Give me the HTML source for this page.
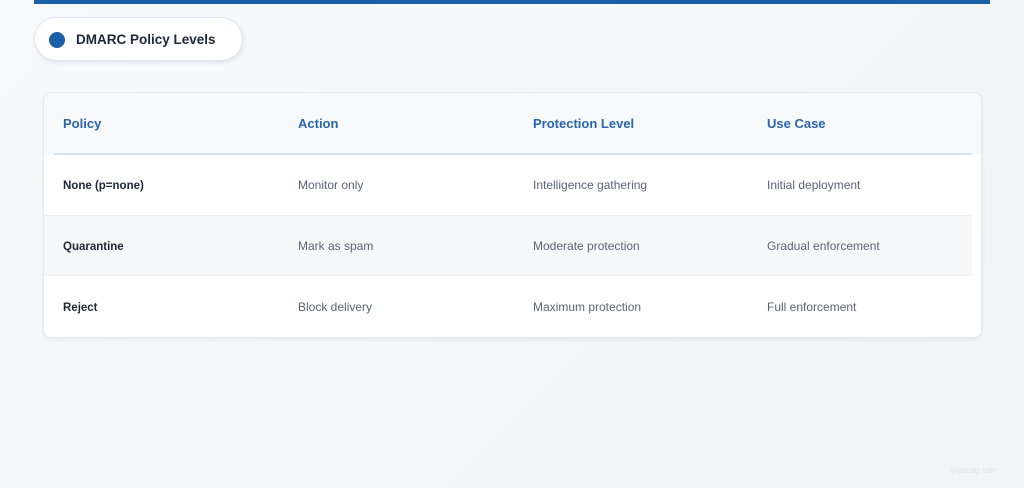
<!DOCTYPE html>
<html><head><meta charset="utf-8"><style>
*{margin:0;padding:0;box-sizing:border-box}
body{width:1024px;height:488px;overflow:hidden;background:linear-gradient(135deg,#f7f9fb 0%,#f1f4f8 100%);font-family:"Liberation Sans",sans-serif;position:relative}
.bar{position:absolute;left:34px;top:0;width:956px;height:4px;background:#1b5fa6}
.pill{position:absolute;left:34px;top:17px;width:209px;height:44px;border-radius:22px;background:#fff;border:1px solid #dde3ec;box-shadow:1px 2px 4px rgba(0,0,0,.08)}
.dot{position:absolute;left:14px;top:14px;width:16px;height:16px;border-radius:50%;background:#1b5fa6}
.pill span{position:absolute;left:41px;top:14px;font-size:13.5px;font-weight:bold;color:#1f2733}
.card{position:absolute;left:43px;top:92px;width:939px;height:246px;background:#fff;border:1px solid #e3e8ef;border-radius:8px;box-shadow:0 2px 4px rgba(0,0,0,.06);overflow:hidden}
.hdr{position:absolute;left:0;top:0;width:100%;height:61px;background:#f7f9fb}
.line{position:absolute;left:10px;top:60px;width:918px;height:2px;background:#d8e1ee}
.r2{position:absolute;left:0;top:122px;width:928px;height:61px;background:#f6f8fa;border-top:1px solid #eef1f5;border-bottom:1px solid #eef1f5}
.t{position:absolute;font-size:12px;color:#5b6472;white-space:nowrap}
.h{position:absolute;font-size:13px;font-weight:bold;color:#2b65ad}
.b{font-weight:bold;color:#1f2733;font-size:11.5px;margin-top:1px}
.wm{position:absolute;left:950px;top:466px;font-size:8px;color:#dde2e9}
</style></head><body>
<div class="bar"></div>
<div class="pill"><div class="dot"></div><span>DMARC Policy Levels</span></div>
<div class="card">
<div class="hdr"></div><div class="line"></div><div class="r2"></div>
<div class="h" style="left:19px;top:23px">Policy</div>
<div class="h" style="left:254px;top:23px">Action</div>
<div class="h" style="left:489px;top:23px">Protection Level</div>
<div class="h" style="left:723px;top:23px">Use Case</div>
<div class="t b" style="left:19px;top:86px">None (p=none)</div>
<div class="t" style="left:254px;top:85px">Monitor only</div>
<div class="t" style="left:489px;top:85px">Intelligence gathering</div>
<div class="t" style="left:723px;top:85px">Initial deployment</div>
<div class="t b" style="left:19px;top:147px">Quarantine</div>
<div class="t" style="left:254px;top:146px">Mark as spam</div>
<div class="t" style="left:489px;top:146px">Moderate protection</div>
<div class="t" style="left:723px;top:146px">Gradual enforcement</div>
<div class="t b" style="left:19px;top:208px">Reject</div>
<div class="t" style="left:254px;top:207px">Block delivery</div>
<div class="t" style="left:489px;top:207px">Maximum protection</div>
<div class="t" style="left:723px;top:207px">Full enforcement</div>
</div>
<div class="wm">skysnag.com</div>
</body></html>
